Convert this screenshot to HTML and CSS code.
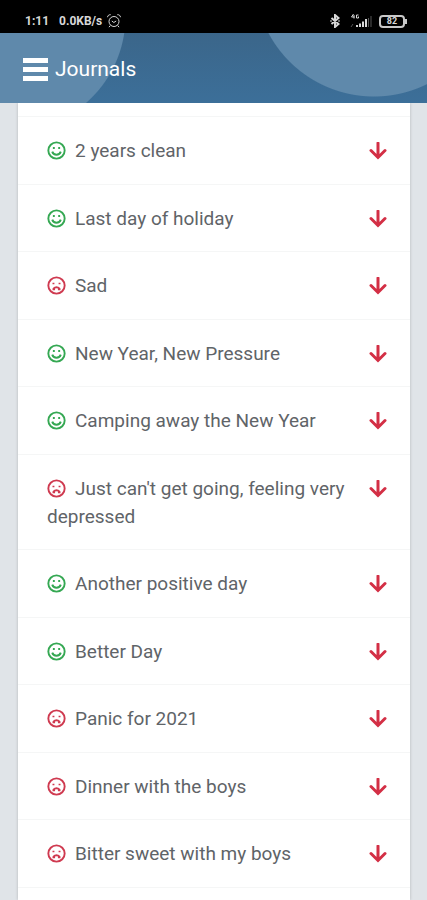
FILE: index.html
```
<!DOCTYPE html>
<html lang="en">
<head>
<meta charset="utf-8">
<meta name="viewport" content="width=device-width, initial-scale=1">
<title>Journals</title>
<link rel="stylesheet" href="styles.css">
</head>
<body>
<svg class="symbols" aria-hidden="true">
  <symbol id="smile" viewBox="0 0 20 20">
    <circle cx="10" cy="10" r="8.600"/>
    <path d="M5.500 11.200c.7 2.200 2.300 3.300 4.500 3.300s3.800-1.100 4.500-3.300"/>
    <path class="eyes" d="M7.200 6.300v2M12.800 6.300v2"/>
  </symbol>
  <symbol id="frown" viewBox="0 0 20 20">
    <circle cx="10" cy="10" r="8.600"/>
    <path d="M5.800 14h2.700M11.500 14h2.700M6.500 14c.6-1.500 1.800-2.200 3.500-2.200s2.900.7 3.500 2.200"/>
    <path class="eyes" d="M6.800 7v1.800M13.200 7v1.800"/>
  </symbol>
  <symbol id="down" viewBox="0 0 18 18">
    <path d="M9 1v14M2 8.500l7 7 7-7"/>
  </symbol>
</svg>
<div class="status">
  <span>1:11</span>
  <span class="rate">0.0KB/s</span>
  <svg class="alarm" viewBox="0 0 16 16" aria-hidden="true">
    <circle cx="8" cy="8.500" r="5"/>
    <path d="M5.800 8l2 1.500 2.400-1.500M1.500 4.200C1.700 2.500 3 1.500 4.700 1.700M14.500 4.200C14.300 2.500 13 1.500 11.300 1.700M4.300 12.500l-1.300 1.700M11.700 12.500l1.300 1.700"/>
  </svg>
  <svg class="bluetooth" viewBox="0 0 10 14" aria-hidden="true">
    <path d="M1.500 4l7 6L5 13V1l3.500 3-7 6M.5 7h1M8.500 7h1"/>
  </svg>
  <svg class="signal" viewBox="0 0 22 14" aria-hidden="true">
    <path d="M3.500 0L1.500 3h3M4 1v3.500M8.500 1H6.500v3h2V2.500"/>
    <path class="bars" d="M7 13v-2M10 13V9.500M13 13V7.500M16 13V5"/>
    <path class="weak" d="M1 13l2-3M18.500 13V4M21 13V2"/>
  </svg>
  <span class="battery">82</span>
</div>
<header class="header">
  <button class="menu" type="button" aria-label="Menu"><span></span><span></span><span></span></button>
  <h1>Journals</h1>
</header>
<main class="card">
  <ul class="journals">
    <li><span class="title"><svg class="mood good"><use href="#smile"/></svg>2 years clean</span><button type="button" aria-label="Expand 2 years clean"><svg><use href="#down"/></svg></button></li>
    <li><span class="title"><svg class="mood good"><use href="#smile"/></svg>Last day of holiday</span><button type="button" aria-label="Expand Last day of holiday"><svg><use href="#down"/></svg></button></li>
    <li><span class="title"><svg class="mood bad"><use href="#frown"/></svg>Sad</span><button type="button" aria-label="Expand Sad"><svg><use href="#down"/></svg></button></li>
    <li><span class="title"><svg class="mood good"><use href="#smile"/></svg>New Year, New Pressure</span><button type="button" aria-label="Expand New Year, New Pressure"><svg><use href="#down"/></svg></button></li>
    <li><span class="title"><svg class="mood good"><use href="#smile"/></svg>Camping away the New Year</span><button type="button" aria-label="Expand Camping away the New Year"><svg><use href="#down"/></svg></button></li>
    <li><span class="title"><svg class="mood bad"><use href="#frown"/></svg>Just can't get going, feeling very depressed</span><button type="button" aria-label="Expand Just can't get going, feeling very depressed"><svg><use href="#down"/></svg></button></li>
    <li><span class="title"><svg class="mood good"><use href="#smile"/></svg>Another positive day</span><button type="button" aria-label="Expand Another positive day"><svg><use href="#down"/></svg></button></li>
    <li><span class="title"><svg class="mood good"><use href="#smile"/></svg>Better Day</span><button type="button" aria-label="Expand Better Day"><svg><use href="#down"/></svg></button></li>
    <li><span class="title"><svg class="mood bad"><use href="#frown"/></svg>Panic for 2021</span><button type="button" aria-label="Expand Panic for 2021"><svg><use href="#down"/></svg></button></li>
    <li><span class="title"><svg class="mood bad"><use href="#frown"/></svg>Dinner with the boys</span><button type="button" aria-label="Expand Dinner with the boys"><svg><use href="#down"/></svg></button></li>
    <li><span class="title"><svg class="mood bad"><use href="#frown"/></svg>Bitter sweet with my boys</span><button type="button" aria-label="Expand Bitter sweet with my boys"><svg><use href="#down"/></svg></button></li>
  </ul>
</main>
</body>
</html>
```
FILE: styles.css
```
* {
  box-sizing: border-box;
}

body {
  display: flex;
  flex-direction: column;
  min-height: 100vh;
  margin: 0;
  background: #e0e4e8;
  color: #5f6468;
  font-family: Roboto, "Liberation Sans", sans-serif;
}

svg {
  fill: none;
  stroke: currentColor;
}

button {
  padding: 0;
  border: 0;
  background: none;
}

.symbols {
  position: absolute;
  width: 0;
  height: 0;
}

.status {
  display: flex;
  align-items: center;
  height: 33px;
  padding: 9px 22px 0 25px;
  background: #000;
  color: #d8d8d8;
  font-size: 12px;
  font-weight: 700;
}

.rate {
  margin-left: 10px;
}

.alarm {
  width: 16px;
  height: 16px;
  margin-left: 4px;
}

.bluetooth {
  width: 10px;
  height: 14px;
  margin-left: auto;
  stroke-width: 2;
}

.signal {
  width: 22px;
  height: 14px;
  margin: 0 7px 0 10px;
}

.bars {
  stroke-width: 2;
}

.weak {
  stroke: #555;
}

.battery {
  position: relative;
  width: 26px;
  border: 2px solid #c8c8c8;
  border-radius: 4px;
  font-size: 9px;
  line-height: 9px;
  text-align: center;
}

.battery::after {
  position: absolute;
  top: 2px;
  right: -4px;
  width: 2px;
  height: 5px;
  background: #c8c8c8;
  content: "";
}

.header {
  position: relative;
  display: flex;
  align-items: center;
  gap: 7px;
  height: 70px;
  padding: 2px 23px 0;
  background:
    radial-gradient(circle at 10px -17px, #5f89ab 115px, transparent 116px),
    radial-gradient(circle at calc(100% - 53px) -56px, #5f89ab 119px, transparent 120px),
    linear-gradient(#3b668a, #3c6f99);
  color: #fff;
}

.header h1 {
  margin: 0;
  font-size: 21px;
  font-weight: 400;
}

.menu {
  display: grid;
  gap: 4px;
  width: 25px;
}

.menu span {
  height: 5px;
  background: #fff;
}

.card {
  flex: 1;
  margin: 0 17px 0 18px;
  padding-top: 13px;
  background: #fff;
  box-shadow: 0 0 3px #0003;
}

.journals {
  margin: 0;
  padding: 0;
  border-top: 1px solid #f5f6f6;
  list-style: none;
}

.journals li {
  display: flex;
  align-items: flex-start;
  gap: 20px;
  padding: 20px 23px 19px 29px;
  border-bottom: 1px solid #f5f6f6;
}

.journals li:nth-child(even) {
  padding-bottom: 18px;
}

.title {
  flex: 1;
  font-size: 19px;
  line-height: 28px;
}

.mood {
  width: 19px;
  height: 19px;
  margin-right: 9px;
  stroke-width: 2;
  vertical-align: -3px;
}

.eyes {
  stroke-width: 2;
}

.good {
  color: #35a853;
}

.bad {
  color: #cf3a50;
}

.journals button {
  display: grid;
  place-items: center;
  height: 28px;
  color: #d32f45;
}

.journals button svg {
  width: 18px;
  height: 18px;
  stroke-width: 3;
  stroke-linecap: round;
}
```
